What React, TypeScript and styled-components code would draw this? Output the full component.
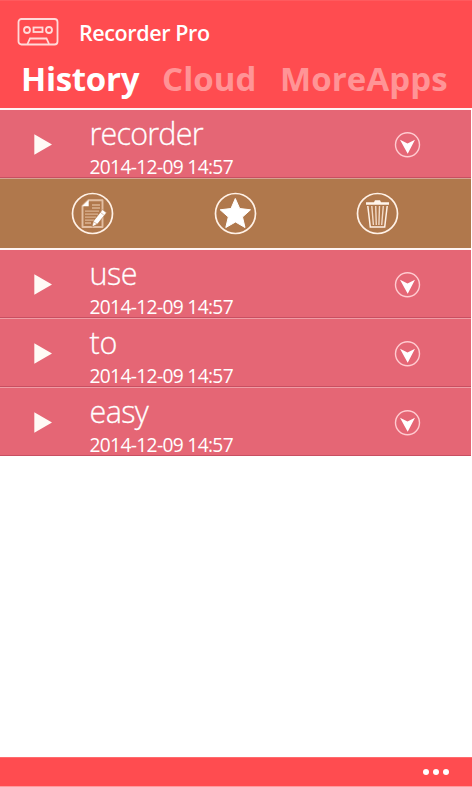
import React from "react";
import styled, { createGlobalStyle } from "styled-components";

const Global = createGlobalStyle`
  * { box-sizing: border-box; }
  body { margin: 0; background: #fff; font-family: "Open Sans", "Noto Sans", sans-serif; color: #fff; }
  svg { display: block; flex: none; }
`;

const Page = styled.div`
  width: 472px;
  height: 787px;
  display: flex;
  flex-direction: column;
  overflow: hidden;
`;

const Header = styled.header`
  height: 108px;
  flex: none;
  padding-top: 17px;
  background: #ff4c50;
  border-top: 1px solid #ff5a5e;
`;

const Brand = styled.div`
  display: flex;
  height: 30px;
  padding-left: 17px;
`;

const AppName = styled.h1`
  margin: 0 0 0 20px;
  font-size: 21.5px;
  line-height: 30px;
  font-weight: 560;
  letter-spacing: -0.4px;
  white-space: nowrap;
`;

const Tabs = styled.nav`
  display: flex;
  margin-top: 10px;
  padding-left: 21px;
`;

const Tab = styled.a<{ $active?: boolean; $width: number; $track: number }>`
  flex: none;
  width: ${(p) => p.$width}px;
  font-size: 33px;
  line-height: 41px;
  font-weight: 700;
  letter-spacing: ${(p) => p.$track}px;
  white-space: nowrap;
  color: ${(p) => (p.$active ? "#fff" : "#ff9496")};
`;

const List = styled.main`
  width: 471px;
  flex: 1;
`;

const Row = styled.section<{ $first?: boolean; $height: number }>`
  height: ${(p) => p.$height}px;
  display: flex;
  background: #e56675;
  border-top: ${(p) => (p.$first ? "2px solid #fff5f3" : "1px solid #ef9ca5")};
  border-bottom: 1px solid #c84f61;
  padding-top: 1px;
`;

const Play = styled.div`
  width: 89.5px;
  padding: 23px 0 0 34px;
`;

const Entry = styled.div`
  width: 304.5px;
`;

const Name = styled.div<{ $track: number }>`
  height: 42px;
  font-size: 30.5px;
  line-height: 45px;
  font-weight: 300;
  -webkit-text-stroke: 0.3px #fff;
  letter-spacing: ${(p) => p.$track}px;
`;

const Stamp = styled.div`
  font-size: 19.2px;
  line-height: 27px;
  letter-spacing: -0.66px;
`;

const Expand = styled.div`
  padding-top: 21px;
`;

const Actions = styled.div`
  height: 70px;
  display: flex;
  justify-content: space-between;
  padding: 13px 72px 0 71px;
  background: #b0784c;
  border-top: 1px solid #d5a391;
`;

const Footer = styled.footer`
  height: 30px;
  flex: none;
  display: flex;
  justify-content: flex-end;
  align-items: center;
  gap: 4px;
  padding-right: 23px;
  background: #ff4c50;
  border-top: 1px solid #ff6b6e;
  border-bottom: 1px solid #ff9a9c;
`;

const Dot = styled.i`
  width: 6px;
  height: 6px;
  border-radius: 50%;
  background: #fff;
`;

const Cassette = () => (
  <svg width="42" height="28" viewBox="0 0 42 28" fill="none" stroke="#ffdad9" strokeWidth="1.8">
    <rect x="1.5" y="1" width="39" height="25.5" rx="3" />
    <circle cx="10" cy="12" r="3" />
    <circle cx="32" cy="12" r="3" />
    <rect x="16.5" y="9.5" width="9" height="4.5" />
    <path d="M10.5 26 13 20.5H29.5L32 26" />
  </svg>
);

const PlayIcon = () => (
  <svg width="19" height="21" viewBox="0 0 19 21">
    <path d="M.3.3 18 10.5.3 20.8Z" fill="#fffaf5" />
  </svg>
);

const ExpandIcon = () => (
  <svg width="27" height="27" viewBox="0 0 27 27">
    <circle cx="13.5" cy="12.7" r="12" fill="none" stroke="#ffcbd0" strokeWidth="1.4" />
    <path d="M6 7.7 13.5 11.5 21 7.7 13.7 21.7Z" fill="#fff" />
  </svg>
);

const ring = <circle cx="21.5" cy="21.5" r="20" fill="none" stroke="#fff1e6" strokeWidth="1.7" />;

const EditIcon = () => (
  <svg width="43" height="43" viewBox="0 0 43 43" fill="none">
    {ring}
    <path d="M11.5 14 17.5 8.2H31.5V35H11.5Z" stroke="#e2bea2" strokeWidth="1.9" strokeLinejoin="round" />
    <path d="M11.2 14.2 17.7 8V14.2Z" fill="#fff" />
    <path d="M21 13H29M21 16H29M14 19.2H28M14 22.2H27M14 25.2H25M14 28.2H23M14 31H20" stroke="#dab291" strokeWidth="1.3" />
    <path d="M21 35 22.5 29 31.5 17.6 35.5 20.8 26.5 32Z" fill="#fff" stroke="#b0784c" strokeWidth=".6" />
    <path d="M23 30 26 32M29.5 20.5 32.8 23" stroke="#b0784c" strokeWidth=".5" />
  </svg>
);

const StarIcon = () => (
  <svg width="43" height="43" viewBox="0 0 43 43">
    {ring}
    <path
      d="M21.3 6.5 25.7 16.5 36.5 17.8 28.5 25 31 35.5 21.5 30 11.8 35.5 14.3 25 6.2 17.8 17 16.5Z"
      fill="#fff"
      stroke="#fff"
      strokeLinejoin="round"
    />
  </svg>
);

const TrashIcon = () => (
  <svg width="43" height="43" viewBox="0 0 43 43" fill="none">
    {ring}
    <path d="M10 10.3H18L19 8.3H24L25 10.3H33V12.8H10Z" fill="#fff5ec" />
    <path d="M11.8 14 14.3 35H28.7L31.2 14" stroke="#fff1e6" strokeWidth="1.5" />
    <path d="M15.8 14 17.4 33M19.7 14 20.3 33M23.5 14 22.9 33M27.3 14 25.7 33" stroke="#f3dac7" strokeWidth="1.4" />
  </svg>
);

type RowProps = { name: string; height: number; first?: boolean; track?: number };

const Recording = ({ name, height, first, track = -0.8 }: RowProps) => (
  <Row $first={first} $height={height}>
    <Play><PlayIcon /></Play>
    <Entry>
      <Name $track={track}>{name}</Name>
      <Stamp>2014-12-09 14:57</Stamp>
    </Entry>
    <Expand><ExpandIcon /></Expand>
  </Row>
);

export default function App() {
  return (
    <Page>
      <Global />
      <Header>
        <Brand>
          <Cassette />
          <AppName>Recorder Pro</AppName>
        </Brand>
        <Tabs>
          <Tab $active $width={141} $track={-0.3}>History</Tab>
          <Tab $width={118} $track={0.1}>Cloud</Tab>
          <Tab $width={180} $track={0.1}>MoreApps</Tab>
        </Tabs>
      </Header>
      <List>
        <Recording name="recorder" height={70} first />
        <Actions>
          <EditIcon />
          <StarIcon />
          <TrashIcon />
        </Actions>
        <Recording name="use" height={70} first track={-0.5} />
        <Recording name="to" height={69} track={-0.3} />
        <Recording name="easy" height={69} track={-0.6} />
      </List>
      <Footer>
        <Dot />
        <Dot />
        <Dot />
      </Footer>
    </Page>
  );
}
